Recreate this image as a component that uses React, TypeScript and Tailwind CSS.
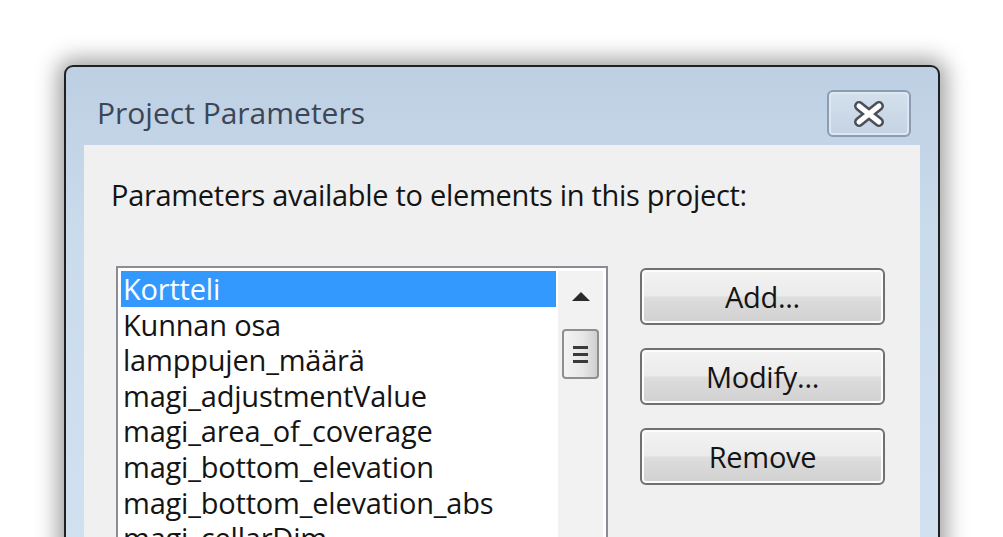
import React from "react";

const items = [
  "Kortteli",
  "Kunnan osa",
  "lamppujen_määrä",
  "magi_adjustmentValue",
  "magi_area_of_coverage",
  "magi_bottom_elevation",
  "magi_bottom_elevation_abs",
  "magi_cellarDim",
];

function Btn({ label }: { label: string }) {
  return (
    <div className="h-[57px] w-[245px] rounded-[6px] border-2 border-[#707070] bg-[linear-gradient(#f3f3f3_0%,#ebebeb_48%,#dddddd_52%,#d0d0d0_100%)] shadow-[inset_0_0_0_2px_#fcfcfc] flex items-center justify-center text-[29px] text-[#141414] tracking-[-0.3px]">
      {label}
    </div>
  );
}

export default function App() {
  return (
    <div
      className="w-[1003px] h-[537px] overflow-hidden bg-white pl-[64px] pt-[65px]"
      style={{ fontFamily: '"Open Sans", "Noto Sans", sans-serif' }}
    >
      <div className="w-[876px] h-[560px] rounded-t-[9px] border-2 border-[#202020] bg-[linear-gradient(#bdcfe2,#cadbec_30%,#d3e2f1)] shadow-[0_0_22px_6px_rgba(0,0,0,0.38)] flex flex-col">
        <div className="h-[78px] shrink-0 flex items-start justify-between pl-[31px] pr-[27px]">
          <div className="mt-[26px] text-[30px] leading-[40px] text-[#3c4656] tracking-[0px]">Project Parameters</div>
          <div className="mt-[23px] w-[84px] h-[47px] rounded-[6px] border-2 border-[#8c9cb2] bg-[linear-gradient(#d4e0ec,#c4d3e3)] shadow-[inset_0_0_0_2px_#dde7f1] flex items-center justify-center">
            <svg width="40" height="26" viewBox="0 0 40 26">
              <path d="M10 5 L30 21 M30 5 L10 21" stroke="#4a4f58" strokeWidth="10" strokeLinecap="round" />
              <path d="M10 5 L30 21 M30 5 L10 21" stroke="#ffffff" strokeWidth="5" strokeLinecap="round" />
            </svg>
          </div>
        </div>
        <div className="flex-1 mx-[18px] bg-[#f0f0f0] pt-[30px] pl-[27px]">
          <div className="text-[29px] leading-[40px] text-[#141414] tracking-[-0.3px]">
            Parameters available to elements in this project:
          </div>
          <div className="mt-[51px] flex gap-[32px] pl-[5px]">
            <div className="w-[492px] h-[400px] border-2 border-[#8a8d93] bg-white p-[3px] flex">
              <div className="flex-1 flex flex-col">
                {items.map((it, i) => (
                  <div
                    key={it}
                    className={
                      "h-[35.6px] shrink-0 leading-[35.6px] pl-[2px] text-[29px] tracking-[-0.2px] whitespace-nowrap " +
                      (i === 0 ? "bg-[#3399ff] text-white" : "text-[#141414]")
                    }
                  >
                    {it}
                  </div>
                ))}
              </div>
              <div className="w-[45px] ml-[2px] bg-[#f2f2f2] flex flex-col items-center">
                <div className="h-[50px] flex items-center justify-center">
                  <svg width="20" height="12" viewBox="0 0 20 12">
                    <path d="M1 11 L10 2 L19 11 Z" fill="#2a2a2a" />
                  </svg>
                </div>
                <div className="mt-[8px] w-[37px] h-[50px] rounded-[4px] border-2 border-[#8f8f8f] bg-[linear-gradient(90deg,#f4f4f4,#e6e6e6_60%,#cfcfcf)] flex flex-col items-center justify-center gap-[4px]">
                  <div className="w-[15px] h-[3px] bg-[#3a3a3a]" />
                  <div className="w-[15px] h-[3px] bg-[#3a3a3a]" />
                  <div className="w-[15px] h-[3px] bg-[#3a3a3a]" />
                </div>
              </div>
            </div>
            <div className="flex flex-col gap-[23px] pt-[2px]">
              <Btn label="Add..." />
              <Btn label="Modify..." />
              <Btn label="Remove" />
            </div>
          </div>
        </div>
      </div>
    </div>
  );
}
